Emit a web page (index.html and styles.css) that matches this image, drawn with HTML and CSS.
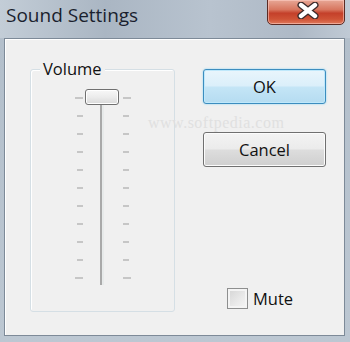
FILE: index.html
```html
<!DOCTYPE html>
<html lang="en">
<head>
  <meta charset="UTF-8">
  <meta name="viewport" content="width=device-width, initial-scale=1.0">
  <title>Sound Settings</title>
  <link rel="stylesheet" href="styles.css">
</head>
<body>
  <div class="window">
    <!-- Title bar -->
    <div class="titlebar">
      <span class="title">Sound Settings</span>
      <button class="close-btn" aria-label="Close">
        <svg width="24" height="17" viewBox="0 0 24 17">
          <path d="M5 3 L19 14 M19 3 L5 14" stroke="#3b2a2a" stroke-width="7" stroke-linecap="round"/>
          <path d="M5 3 L19 14 M19 3 L5 14" stroke="#ffffff" stroke-width="4.4" stroke-linecap="round"/>
        </svg>
      </button>
    </div>

    <!-- Client area -->
    <div class="client">
      <div class="group-box">
        <span class="group-label">Volume</span>
        <div class="slider">
          <div class="ticks ticks-left">
            <i class="wide"></i><i></i><i></i><i></i><i></i><i></i><i></i><i></i><i></i><i></i><i class="wide"></i>
          </div>
          <div class="track">
            <div class="thumb"></div>
            <div class="rail"></div>
          </div>
          <div class="ticks ticks-right">
            <i class="wide"></i><i></i><i></i><i></i><i></i><i></i><i></i><i></i><i></i><i></i><i class="wide"></i>
          </div>
        </div>
      </div>

      <div class="actions">
        <button class="btn btn-default">OK</button>
        <button class="btn">Cancel</button>
        <label class="mute">
          <span class="checkbox"></span>
          Mute
        </label>
      </div>
    </div>

    <!-- Watermark from the screenshot -->
    <div class="watermark-url">www.softpedia.com</div>
  </div>
</body>
</html>
```

FILE: styles.css
```css
body {
  margin: 0;
  padding: 0;
  font-family: "Open Sans", "Noto Sans", sans-serif;
}

.window {
  position: relative;
  width: 350px;
  height: 342px;
  display: flex;
  flex-direction: column;
  background: linear-gradient(180deg, #c6d0da 0%, #b3bfcb 12%, #bcc7d2 100%);
  overflow: hidden;
}

/* Title bar */
.titlebar {
  height: 38px;
  display: flex;
  align-items: flex-start;
  justify-content: space-between;
  background: linear-gradient(90deg, #c3cdd7 0%, #aab6c3 30%, #b8c3cf 60%, #aeb9c6 85%, #c0cad5 100%);
}

.title {
  margin: 2px 0 0 6px;
  font-size: 19px;
  color: #1a1f2e;
}

.close-btn {
  width: 78px;
  height: 26px;
  margin: -1px 5px 0 0;
  padding: 0 0 4px 3px;
  border: 1px solid #5b2b24;
  border-radius: 0 0 5px 5px;
  background: linear-gradient(180deg, #e7a796 0%, #d8765f 40%, #c4402a 55%, #cf5336 80%, #e07a5d 100%);
  box-shadow: inset 0 0 0 1px rgba(255, 210, 200, 0.55);
  display: flex;
  align-items: center;
  justify-content: center;
  cursor: pointer;
}

/* Client area */
.client {
  flex: 1;
  margin: 0 5px 6px 4px;
  border: 1px solid #7d8a98;
  box-shadow: inset 1px 1px 0 #ffffff;
  background-color: #f0f0f0;
  display: flex;
  padding: 30px 0 0 25px;
}

.group-box {
  width: 143px;
  height: 241px;
  border: 1px solid #d5dfe5;
  border-radius: 3px;
  box-shadow: inset 1px 1px 0 #fff;
  display: flex;
  flex-direction: column;
  align-items: center;
}

.group-label {
  align-self: flex-start;
  margin: -12px 0 0 9px;
  padding: 0 3px;
  background-color: #f0f0f0;
  font-size: 16.5px;
  line-height: 22px;
  color: #111;
}

/* Slider */
.slider {
  display: flex;
  align-items: flex-start;
  gap: 2px;
  margin-top: 9px;
}

.ticks {
  width: 8px;
  height: 182px;
  margin-top: 8px;
  display: flex;
  flex-direction: column;
  justify-content: space-between;
  align-items: flex-end;
}

.ticks-right {
  align-items: flex-start;
  margin-left: 2px;
}

.ticks i {
  display: block;
  width: 6px;
  height: 2px;
  background-color: #c6c6c6;
}

.ticks i.wide {
  width: 8px;
}

.track {
  width: 34px;
  display: flex;
  flex-direction: column;
  align-items: center;
}

.thumb {
  width: 32px;
  height: 14px;
  border: 1px solid #707070;
  border-radius: 3px;
  background: linear-gradient(180deg, #f8f8f8 0%, #ececec 50%, #d9d9d9 100%);
  box-shadow: inset 0 0 0 1px #fff;
}

.rail {
  width: 2px;
  height: 180px;
  background-color: #a9a9a9;
  border-right: 2px solid #e7eaea;
}

/* Buttons and checkbox */
.actions {
  display: flex;
  flex-direction: column;
  margin-left: 28px;
}

.btn {
  width: 123px;
  height: 35px;
  margin-bottom: 28px;
  border: 1px solid #707070;
  border-radius: 3px;
  background: linear-gradient(180deg, #f3f3f3 0%, #ebebeb 48%, #dddddd 52%, #cfcfcf 100%);
  box-shadow: inset 0 0 0 1px #fcfcfc;
  font-family: "Open Sans", "Noto Sans", sans-serif;
  font-size: 16.5px;
  color: #111;
  cursor: pointer;
}

.btn-default {
  border-color: #3c8dbf;
  background: linear-gradient(180deg, #e9f5fc 0%, #dbeffa 48%, #c4e5f6 52%, #b5dcf1 100%);
  box-shadow: inset 0 0 0 1px #bfe8fb, 0 0 2px #7fd0f4;
}

.mute {
  display: flex;
  align-items: center;
  gap: 5px;
  margin: 92px 0 0 24px;
  font-size: 16.5px;
  color: #111;
}

.checkbox {
  width: 19px;
  height: 19px;
  border: 1px solid #8e8f8f;
  background: linear-gradient(135deg, #d4d4d4 0%, #eaeaea 60%, #f6f6f6 100%);
  box-shadow: inset 0 0 0 2px #f4f4f4;
}

/* Watermark */
.watermark-url {
  position: absolute;
  left: 148px;
  top: 114px;
  font-family: "Liberation Serif", serif;
  font-size: 16px;
  letter-spacing: 0.5px;
  color: #e0e0e0;
  pointer-events: none;
}
```
